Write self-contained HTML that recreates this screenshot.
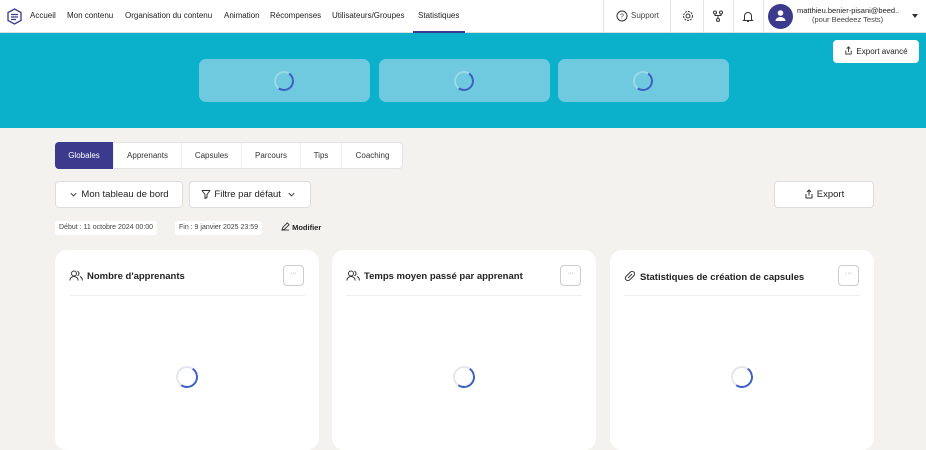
<!DOCTYPE html><html><head><meta charset="utf-8"><style>
*{box-sizing:border-box;margin:0;padding:0}
body{width:926px;height:433px;overflow:hidden;background:#f3f2ef;font-family:"Liberation Sans",sans-serif;color:#222;position:relative}
.a{position:absolute}
.nav{left:0;top:0;width:926px;height:33px;background:#fff;border-bottom:1px solid #ddd}
.nav span{position:absolute;top:11px;font-size:8px;color:#222}
.hero{left:0;top:33px;width:926px;height:95px;background:#0bb0cb}
.ph{top:59px;width:171px;height:43px;border-radius:7px;background:#6fcadf}
.sp{width:20px;height:20px;border-radius:50%;border:2.5px solid rgba(255,255,255,.3);border-right-color:#3e5fc4;border-bottom-color:#3e5fc4;transform:rotate(-10deg)}
.tabs{left:55px;top:142px;height:27px;width:348px;background:#fff;border:1px solid #e3e3e3;border-radius:4px}
.tab{position:absolute;top:0;height:25px;line-height:25px;text-align:center;font-size:8px;color:#333;border-right:1px solid #eee}
.btn{top:181px;height:27px;background:#fff;border:1px solid #ddd;border-radius:4px;font-size:9.5px;line-height:25px;text-align:center;color:#222}
.btn svg{vertical-align:-2px;margin-right:3px}
.pill{top:221px;height:14px;background:#fff;border-radius:3px;font-size:7px;line-height:14px;padding:0 4px;color:#444}
.card{top:250px;width:264px;height:200px;background:#fff;border-radius:12px}
.card .t{position:absolute;left:14px;top:20px;font-size:9.5px;font-weight:bold;color:#222}
.card .t svg{vertical-align:-2px;margin-right:4px}
.card .m{position:absolute;right:15px;top:15px;width:21px;height:21px;border:1px solid #ccc;border-radius:4px;font-size:7px;text-align:center;line-height:16px;color:#888}
.card .l{position:absolute;left:14px;right:14px;top:45px;border-top:1px solid #eee}
.card .sp{position:absolute;left:121px;top:116px;border-color:#e3e6ee;border-right-color:#3e5fc4;border-bottom-color:#3e5fc4;width:22px;height:22px}
</style></head><body>
<div class="a nav">
<svg class="a" style="left:7px;top:8px" width="15" height="17" viewBox="0 0 15 17"><path d="M7.5 1L14 4.5V12.5L7.5 16L1 12.5V4.5Z" fill="none" stroke="#3a3a8a" stroke-width="1.3"/><path d="M4 6.5h7M4 9h7M4 11.5h5" stroke="#3a3a8a" stroke-width="1.3"/></svg>
<span style="left:30px">Accueil</span><span style="left:67px">Mon contenu</span><span style="left:125px">Organisation du contenu</span><span style="left:224px">Animation</span><span style="left:270px">Récompenses</span><span style="left:332px">Utilisateurs/Groupes</span><span style="left:418px">Statistiques</span>
<div class="a" style="left:413px;top:31px;width:52px;height:2px;background:#3c3a8c"></div>
<div class="a" style="left:603px;top:0;height:33px;border-left:1px solid #e5e5e5"></div>
<div class="a" style="left:670px;top:0;height:33px;border-left:1px solid #e5e5e5"></div>
<div class="a" style="left:703px;top:0;height:33px;border-left:1px solid #e5e5e5"></div>
<div class="a" style="left:733px;top:0;height:33px;border-left:1px solid #e5e5e5"></div>
<div class="a" style="left:763px;top:0;height:33px;border-left:1px solid #e5e5e5"></div>
<svg class="a" style="left:616px;top:10px" width="12" height="12" viewBox="0 0 12 12"><circle cx="6" cy="6" r="5" fill="none" stroke="#333"/><text x="6" y="8.5" font-size="7" text-anchor="middle" fill="#333" font-family="Liberation Sans">?</text></svg>
<span style="left:631px;color:#444">Support</span>
<svg class="a" style="left:682px;top:10px" width="12" height="12" viewBox="0 0 12 12"><circle cx="6" cy="6" r="4.5" fill="none" stroke="#333" stroke-dasharray="2 1"/><circle cx="6" cy="6" r="2" fill="none" stroke="#333"/></svg>
<svg class="a" style="left:712px;top:10px" width="12" height="12" viewBox="0 0 12 12"><circle cx="3" cy="2.5" r="1.5" fill="none" stroke="#333"/><circle cx="9" cy="2.5" r="1.5" fill="none" stroke="#333"/><circle cx="6" cy="10" r="1.5" fill="none" stroke="#333"/><path d="M3 4v1.5h6V4M6 5.5v3" fill="none" stroke="#333"/></svg>
<svg class="a" style="left:742px;top:10px" width="12" height="13" viewBox="0 0 12 13"><path d="M2.5 9.5V6a3.5 3.5 0 017 0v3.5l1 1H1.5z M5 11.5h2" fill="none" stroke="#333"/></svg>
<div class="a" style="left:768px;top:4px;width:25px;height:25px;border-radius:50%;background:#3c3a8c"></div>
<svg class="a" style="left:773px;top:8px" width="15" height="15" viewBox="0 0 15 15"><circle cx="7.5" cy="5" r="2.8" fill="#fff"/><path d="M2.5 13a5 4 0 0110 0z" fill="#fff"/></svg>
<span style="left:797px;top:6px;font-size:7.5px">matthieu.benier-pisani@beed..</span>
<span style="left:812px;top:15px;font-size:7.5px;color:#444">(pour Beedeez Tests)</span>
<div class="a" style="left:912px;top:14px;border:3px solid transparent;border-top:4px solid #333"></div>
</div>
<div class="a hero"></div>
<div class="a ph" style="left:199px"><div class="sp a" style="left:75px;top:12px"></div></div>
<div class="a ph" style="left:379px"><div class="sp a" style="left:75px;top:12px"></div></div>
<div class="a ph" style="left:558px"><div class="sp a" style="left:75px;top:12px"></div></div>
<div class="a" style="left:833px;top:40px;width:86px;height:23px;background:#fff;border-radius:4px;font-size:8px;line-height:23px;text-align:center"><svg width="9" height="9" viewBox="0 0 10 10" style="vertical-align:-1px;margin-right:3px"><path d="M5 6.5V1M3 3l2-2 2 2M2 5v4h6V5" fill="none" stroke="#333"/></svg>Export avancé</div>
<div class="a tabs">
<div class="tab" style="left:-1px;top:-1px;height:27px;line-height:27px;width:59px;background:#3c3a8c;color:#fff;border-radius:4px 0 0 4px">Globales</div>
<div class="tab" style="left:58px;width:68px">Apprenants</div>
<div class="tab" style="left:126px;width:60px">Capsules</div>
<div class="tab" style="left:186px;width:59px">Parcours</div>
<div class="tab" style="left:245px;width:41px">Tips</div>
<div class="tab" style="left:286px;width:61px;border:none">Coaching</div>
</div>
<div class="a btn" style="left:55px;width:128px"><svg width="9" height="9" viewBox="0 0 10 10"><path d="M2 3.5l3 3 3-3" fill="none" stroke="#333"/></svg>Mon tableau de bord</div>
<div class="a btn" style="left:189px;width:122px"><svg width="10" height="10" viewBox="0 0 10 10"><path d="M1 1.5h8L6 5.5v3L4 9.5v-4z" fill="none" stroke="#333" stroke-linejoin="round"/></svg>Filtre par défaut <svg width="9" height="9" viewBox="0 0 10 10" style="margin-left:3px"><path d="M2 3.5l3 3 3-3" fill="none" stroke="#333"/></svg></div>
<div class="a btn" style="left:774px;width:100px"><svg width="10" height="10" viewBox="0 0 10 10"><path d="M5 6.5V1M3 3l2-2 2 2M2 5v4h6V5" fill="none" stroke="#333"/></svg>Export</div>
<div class="a pill" style="left:55px">Début : 11 octobre 2024 00:00</div>
<div class="a pill" style="left:175px">Fin : 9 janvier 2025 23:59</div>
<div class="a" style="left:281px;top:222px;font-size:7.5px;font-weight:bold"><svg width="9" height="9" viewBox="0 0 10 10" style="vertical-align:-1px"><path d="M1 9l1-3 5-5 2 2-5 5zM1 9h8" fill="none" stroke="#333"/></svg> Modifier</div>
<svg width="0" height="0" style="position:absolute"><defs><symbol id="pp" viewBox="0 0 14 11"><circle cx="5" cy="3.5" r="2.5" fill="none" stroke="#333"/><path d="M0.8 10.5a4.2 4 0 018.4 0" fill="none" stroke="#333"/><path d="M8.5 1.2a2.5 2.5 0 010 4.6M11 6.5a4 4 0 012.3 4" fill="none" stroke="#333"/></symbol></defs></svg>
<div class="a card" style="left:55px"><div class="t"><svg width="14" height="11"><use href="#pp"/></svg>Nombre d'apprenants</div><div class="m">···</div><div class="l"></div><div class="sp"></div></div>
<div class="a card" style="left:332px"><div class="t"><svg width="14" height="11"><use href="#pp"/></svg>Temps moyen passé par apprenant</div><div class="m">···</div><div class="l"></div><div class="sp"></div></div>
<div class="a card" style="left:610px"><div class="t"><svg width="12" height="12" viewBox="0 0 12 12"><rect x="3.5" y="0.5" width="5" height="11" rx="2.5" transform="rotate(45 6 6)" fill="none" stroke="#333"/><path d="M4 8l4-4" stroke="#333"/></svg>Statistiques de création de capsules</div><div class="m">···</div><div class="l"></div><div class="sp"></div></div>
</body></html>
